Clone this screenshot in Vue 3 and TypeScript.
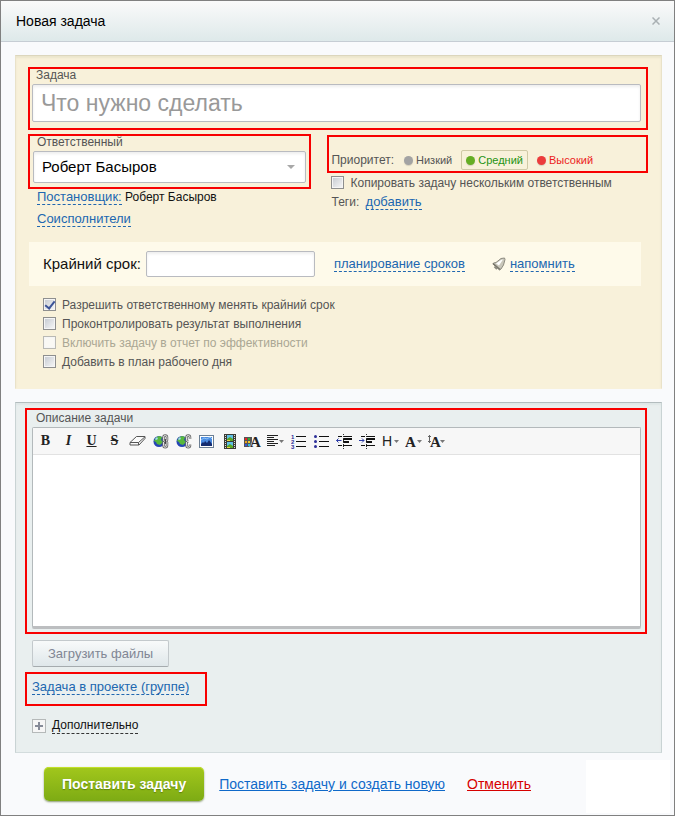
<script setup lang="ts">
import { ref } from 'vue'

interface Option {
  id: string
  label: string
  checked: boolean
  disabled?: boolean
}

const title = ref('')
const responsible = ref('Роберт Басыров')
const deadline = ref('')
const description = ref('')
const copyTask = ref(false)
const priority = ref('medium')

const priorities = [
  { id: 'low', label: 'Низкий' },
  { id: 'medium', label: 'Средний' },
  { id: 'high', label: 'Высокий' },
]

const options = ref<Option[]>([
  { id: 'allow', label: 'Разрешить ответственному менять крайний срок', checked: true },
  { id: 'control', label: 'Проконтролировать результат выполнения', checked: false },
  { id: 'report', label: 'Включить задачу в отчет по эффективности', checked: false, disabled: true },
  { id: 'plan', label: 'Добавить в план рабочего дня', checked: false },
])

const tools = [
  'bold', 'italic', 'underline', 'strike', 'eraser', 'link', 'unlink', 'image', 'video',
  'color', 'align', 'ol', 'ul', 'outdent', 'indent', 'heading', 'font', 'size',
]
const letters: Record<string, string> = { bold: 'B', italic: 'I', underline: 'U', strike: 'S' }
</script>

<template>
  <form class="dialog" @submit.prevent>
    <header class="head">
      <h1>Новая задача</h1>
      <button type="button" class="close" aria-label="Закрыть">
        <svg width="8" height="8" viewBox="0 0 8 8"><path d="M.5.5l7 7M7.5.5l-7 7" stroke="#a9b0b3" stroke-width="1.5" /></svg>
      </button>
    </header>

    <main class="body">
      <section class="panel warm">
        <div class="mark task">
          <label for="title">Задача</label>
          <input id="title" v-model="title" class="field" type="text" placeholder="Что нужно сделать" />
        </div>

        <div class="cols">
          <div class="left">
            <div class="mark person">
              <label for="responsible">Ответственный</label>
              <div class="select">
                <select id="responsible" v-model="responsible" class="field">
                  <option>Роберт Басыров</option>
                </select>
                <svg class="arrow" width="8" height="4" viewBox="0 0 8 4"><path d="M0 0h8L4 4z" fill="#a8a8a8" /></svg>
              </div>
            </div>
            <p class="line"><a href="#" class="dash">Постановщик:</a> <span class="name">Роберт Басыров</span></p>
            <p class="line"><a href="#" class="dash">Соисполнители</a></p>
          </div>

          <div class="right">
            <div class="mark priority" role="radiogroup" aria-label="Приоритет">
              <span class="caption">Приоритет:</span>
              <label v-for="p in priorities" :key="p.id" class="level" :class="[p.id, { on: priority === p.id }]">
                <input v-model="priority" type="radio" name="priority" :value="p.id" />{{ p.label }}
              </label>
            </div>
            <label class="check copy"><input v-model="copyTask" type="checkbox" />Копировать задачу нескольким ответственным</label>
            <p class="tags">Теги: <a href="#" class="dash">добавить</a></p>
          </div>
        </div>

        <div class="deadline">
          <label for="deadline">Крайний срок:</label>
          <input id="deadline" v-model="deadline" class="field" type="text" />
          <a href="#" class="dash">планирование сроков</a>
          <span class="remind">
            <svg width="14" height="14" viewBox="0 0 14 14">
              <path d="M1.5 6L4 5.500 9 1.500 12.500 1l.5 1.500L11.500 8l-2.500 4L7.500 13 1 7z" fill="#c9c7bb" stroke="#8d8b80" />
              <path d="M4 6.500l5-3.500 2-.5-4 6z" fill="#fff" />
              <path d="M1 6.500l7 6" stroke="#77756b" stroke-width="1.500" />
              <path d="M2.500 9.500l2.500 2.500" stroke="#8d8b80" stroke-width="2" />
            </svg>
            <a href="#" class="dash">напомнить</a>
          </span>
        </div>

        <div class="options">
          <label v-for="o in options" :key="o.id" class="check" :class="{ off: o.disabled }">
            <input v-model="o.checked" type="checkbox" :disabled="o.disabled" />{{ o.label }}
          </label>
        </div>
      </section>

      <section class="panel cool">
        <div class="mark descr">
          <label for="description">Описание задачи</label>
          <div class="editor">
            <div class="toolbar" role="toolbar">
              <button v-for="t in tools" :key="t" type="button" class="tool" :class="t" :aria-label="t">
                <template v-if="letters[t]">{{ letters[t] }}</template>
                <svg v-else-if="t === 'eraser'" width="17" height="10" viewBox="0 0 17 10" fill="#fafafa" stroke="#555">
                  <path d="M1 6.500L7.500.5h8.500v2L10 9H1z" /><path d="M1 6.500h8.500L16 .8M9.500 6.500V9" />
                </svg>
                <svg v-else-if="t === 'link' || t === 'unlink'" width="16" height="15" viewBox="0 0 16 15" fill="none">
                  <circle cx="6" cy="7.500" r="5.500" fill="#2746b4" />
                  <path d="M3 3.500l3-1.500 3 1-1 3 2 2-3 3-3-1-1-2-2-1z" fill="#58b83c" />
                  <path d="M2 5l2-2 1 2-2 1z" fill="#9fd8f0" />
                  <rect x="10.500" y="1.500" width="3.500" height="6" rx="1.700" stroke="#666" stroke-width="2.500" />
                  <path v-if="t === 'link'" d="M10.500 8v3.500a1.700 1.700 0 0 0 3.500 0V8" stroke="#666" stroke-width="2.500" />
                  <path v-else d="M10.500 8v3.500a1.700 1.700 0 0 0 3.500 0v-1" stroke="#666" stroke-width="2.500" />
                  <rect x="10.500" y="1.500" width="3.500" height="6" rx="1.700" stroke="#e4e4e4" />
                  <path v-if="t === 'link'" d="M10.500 8v3.500a1.700 1.700 0 0 0 3.500 0V8" stroke="#e4e4e4" />
                  <path v-else d="M10.500 8v3.500a1.700 1.700 0 0 0 3.500 0v-1" stroke="#e4e4e4" />
                  <path v-if="t === 'link'" d="M12.300 5v5" stroke="#333" />
                  <path v-else d="M12.500 5v4.500H16V5z" fill="#f8f8f8" />
                </svg>
                <svg v-else-if="t === 'image'" width="15" height="13" viewBox="0 0 15 13">
                  <rect x=".5" y=".5" width="14" height="12" fill="#fff" stroke="#6c7f94" />
                  <rect x="2" y="2" width="11" height="9" fill="#4a8ae0" />
                  <path d="M2 11V9l2-2 1 1 1-2 2 2 2-3 3 4v2z" fill="#152c70" />
                  <path d="M2 5l3-2 3 1 3-2 2 2" stroke="#8fc3f6" fill="none" />
                </svg>
                <svg v-else-if="t === 'video'" width="12" height="15" viewBox="0 0 12 15">
                  <path d="M0 0h12v15H0z" fill="#3c3c36" />
                  <path d="M3 1h6v6H3zM3 8h6v6H3z" fill="#5fc0e6" />
                  <path d="M3 5l3-2 3 2v2H3zM3 12l3-2 3 2v2H3z" fill="#5ca824" />
                  <path d="M3 6h3v1H3zM3 13h3v1H3z" fill="#e8d53c" />
                  <path d="M1.500 1v14M10.500 1v14" stroke="#ddd" stroke-dasharray="1 1" />
                </svg>
                <svg v-else-if="t === 'color'" width="18" height="19" viewBox="0 -3 18 19">
                  <path d="M0 2h8v10H0z" fill="#555" />
                  <path d="M1 3h2v2H1z" fill="#e22" /><path d="M4 3h2v2H4z" fill="#3a3" />
                  <path d="M1 6h2v2H1z" fill="#f0a020" /><path d="M4 6h2v2H4z" fill="#e8d030" />
                  <path d="M1 9h2v2H1z" fill="#35d" /><path d="M4 9h2v2H4z" fill="#3bd" />
                  <text x="6" y="12" class="glyph" stroke="#f8f8f8" stroke-width="1" paint-order="stroke">A</text>
                </svg>
                <svg v-else-if="t === 'align'" width="18" height="12" viewBox="0 0 18 12">
                  <path d="M0 .5h11M0 2.500h7M0 4.500h11M0 6.500h7M0 8.500h11M0 10.500h8" stroke="#222" />
                  <path d="M12 5h5l-2.500 3z" fill="#777" />
                </svg>
                <svg v-else-if="t === 'ol'" width="15" height="19" viewBox="0 -2 15 19">
                  <text x="0" y="5" class="num">1</text><text x="0" y="10" class="num">2</text><text x="0" y="15" class="num">3</text>
                  <path d="M5 2.500h10M5 7.500h10M5 12.500h10" stroke="#111" />
                </svg>
                <svg v-else-if="t === 'ul'" width="15" height="15" viewBox="0 0 15 15">
                  <path d="M5 2.500h10M5 7.500h10M5 12.500h10" stroke="#111" />
                  <circle cx="1.500" cy="2.500" r="1.500" fill="#2c2f98" /><circle cx="1.500" cy="7.500" r="1.500" fill="#2c2f98" /><circle cx="1.500" cy="12.500" r="1.500" fill="#2c2f98" />
                </svg>
                <svg v-else-if="t === 'outdent' || t === 'indent'" width="17" height="15" viewBox="0 0 17 15">
                  <path d="M2 2.500h4M7 2.500h9M2 11.500h4M7 11.500h9" stroke="#111" />
                  <path d="M7 5h9M7 8h6" stroke="#111" stroke-width="2" />
                  <path d="M7.500 0v15" stroke="#333" stroke-dasharray="1 1" />
                  <path v-if="t === 'outdent'" d="M5.500 6.500h-5M2.500 4.500l-2 2 2 2" stroke="#2c3ca8" fill="none" />
                  <path v-else d="M0 6.500h5M3 4.500l2 2-2 2" stroke="#2c3ca8" fill="none" />
                </svg>
                <svg v-else width="18" height="19" viewBox="0 -3 18 19">
                  <text v-if="t === 'heading'" x="0" y="11" class="sans">H</text>
                  <text v-else-if="t === 'font'" x="0" y="12" class="glyph">A</text>
                  <text v-else x="2" y="12" class="glyph">A</text>
                  <path v-if="t === 'size'" d="M1.500 0v8M0 1.500h3M0 6.500h3" stroke="#666" />
                  <path d="M12 5h5l-2.500 3z" fill="#777" />
                </svg>
              </button>
            </div>
            <textarea id="description" v-model="description"></textarea>
          </div>
        </div>

        <button type="button" class="upload">Загрузить файлы</button>
        <div class="mark project"><a href="#" class="dash">Задача в проекте (группе)</a></div>
        <div class="more">
          <button type="button" class="plus" aria-label="Раскрыть">
            <svg width="8" height="8" viewBox="0 0 8 8"><path d="M4 0v8M0 4h8" stroke="#868b98" stroke-width="2" /></svg>
          </button>
          <a href="#" class="dash dark">Дополнительно</a>
        </div>
      </section>
    </main>

    <footer class="foot">
      <div class="actions">
        <button type="submit" class="submit">Поставить задачу</button>
        <a href="#" class="create">Поставить задачу и создать новую</a>
        <a href="#" class="cancel">Отменить</a>
      </div>
      <span class="blank"></span>
    </footer>
  </form>
</template>

<style>
body {
  background: #f9fafc;
}
</style>

<style scoped>
* {
  box-sizing: border-box;
}
.dialog {
  display: flex;
  flex-direction: column;
  min-height: 100vh;
  border: 1px solid #808080;
  background: #f9fafc;
  font: 12px/16px "Liberation Sans", Arial, sans-serif;
  color: #555;
}
button,
input,
select,
textarea {
  margin: 0;
  font: inherit;
}
.head {
  display: flex;
  align-items: center;
  justify-content: space-between;
  height: 41px;
  padding: 0 14px 0 15px;
  border-bottom: 1px solid #c6cdd4;
  background: linear-gradient(#fafafa, #dee9ea);
}
h1 {
  margin: 0;
  font-size: 14px;
  font-weight: normal;
  color: #000;
}
.close {
  display: flex;
  padding: 0;
  border: 0;
  background: none;
}
.body {
  display: flex;
  flex-direction: column;
  gap: 13px;
  padding: 13px 12px 0 14px;
}
.panel {
  border: 1px solid;
}
.warm {
  padding: 11px 13px 17px 12px;
  border-color: #dcd6bd #e9e2c9 #f8f1da #e9e2c9;
  background: #f8f1da;
  box-shadow: inset 0 2px 2px #ebe5cd;
}
.cool {
  padding: 5px 14px 18px 9px;
  border-color: #b3bcbe #c9d3d4 #d3dcdd #c9d3d4;
  background: #e9efef;
  box-shadow: inset 0 2px 2px #dfe6e6;
}
.mark {
  border: 2px solid #f80000;
}
.field {
  display: block;
  width: 100%;
  padding: 0 8px;
  border: 1px solid #b9bbc0;
  border-radius: 2px;
  background: #fff;
  color: #000;
  box-shadow: inset 0 2px 3px #eee;
}
.task {
  padding: 0 5px 6px 2px;
}
.task label,
.person label,
.descr label {
  display: block;
  padding-left: 4px;
}
.task label,
.person label {
  padding-bottom: 3px;
  line-height: 12px;
}
.task .field {
  height: 38px;
  font-size: 23px;
}
.field::placeholder {
  color: #999;
}
.cols {
  display: flex;
  gap: 16px;
  margin-top: 4px;
}
.left {
  flex: 283 1 0;
}
.right {
  flex: 320 1 0;
}
.person {
  padding: 0 3px 4px 3px;
}
.select {
  display: grid;
  align-items: center;
}
.select > * {
  grid-area: 1 / 1;
}
.select .field {
  height: 32px;
  font-size: 15px;
  appearance: none;
}
.arrow {
  justify-self: end;
  margin-right: 11px;
  pointer-events: none;
}
.line {
  height: 22px;
  margin: 0;
  padding-left: 9px;
}
.name {
  color: #111;
}
.dash {
  border-bottom: 1px dashed #2067b0;
  color: #2067b0;
  font-size: 13px;
  line-height: 15px;
  text-decoration: none;
}
.dark {
  border-color: #333;
  color: #111;
}
.priority {
  display: flex;
  align-items: flex-end;
  height: 38px;
  padding: 0 2px 1px;
  margin-top: 1px;
  line-height: 18px;
}
.caption {
  margin-right: 5px;
  padding-bottom: 1px;
}
.level {
  display: flex;
  align-items: center;
  gap: 3px;
  margin-right: 4px;
  padding: 0 4px;
  border: 1px solid transparent;
  border-radius: 2px;
  font-size: 11px;
}
.level.on {
  border-color: #cfc9a6;
}
.level input {
  width: 9px;
  height: 9px;
  appearance: none;
  border-radius: 50%;
  background: #a3a3a3;
  box-shadow: 0 1px 1px #d6d0bc;
}
.medium {
  color: #259313;
}
.medium input {
  background: #65ae24;
}
.high {
  color: #ec1c1c;
}
.high input {
  background: #ec3c3c;
}
.check {
  display: flex;
  align-items: center;
  gap: 6px;
  height: 19px;
}
.check input {
  display: grid;
  place-items: center;
  flex: none;
  width: 13px;
  height: 13px;
  border: 1px solid #8e8f8f;
  outline: 1px solid #f5f5f5;
  outline-offset: -2px;
  appearance: none;
  background: linear-gradient(135deg, #c4c9d0, #f8f8f8);
}
.check input:checked::after {
  content: "";
  width: 4px;
  height: 8px;
  margin-bottom: 2px;
  border: solid #3b5397;
  border-width: 0 2px 2px 0;
  transform: rotate(38deg);
}
.off {
  color: #aaa794;
}
.off input {
  border-color: #b9b9b4;
  background: #f9f8f4;
}
.copy {
  padding-left: 4px;
}
.tags {
  margin: 2px 0 0;
  padding-left: 4px;
}
.tags .dash {
  margin-left: 3px;
}
.deadline {
  display: flex;
  align-items: center;
  height: 44px;
  margin: 9px 7px 0 1px;
  padding-left: 14px;
  background: #fefaea;
}
.deadline > label {
  margin-right: 5px;
  font-size: 15px;
  color: #111;
}
.deadline .field {
  flex: 0 1 169px;
  min-width: 0;
  height: 26px;
  margin-right: 19px;
}
.remind {
  display: flex;
  align-items: center;
  gap: 4px;
  margin-left: 27px;
}
.options {
  padding: 9px 0 0 15px;
}
.descr {
  padding: 0 4px 3px 5px;
}
.descr label {
  line-height: 17px;
}
.editor {
  border: 1px solid #b3b9bb;
  border-bottom: 3px solid #bcbec0;
  border-radius: 2px;
  background: #fff;
}
.toolbar {
  display: flex;
  flex-wrap: wrap;
  padding: 1px;
  border-bottom: 1px solid #e2e2e2;
  background: #f7f7f7;
}
.tool {
  display: flex;
  align-items: center;
  justify-content: center;
  width: 23px;
  height: 24px;
  padding: 0;
  border: 0;
  background: none;
  color: #222;
  font: bold 14px/16px "Liberation Serif", serif;
}
.italic {
  font-style: italic;
}
.underline {
  text-decoration: underline;
}
.strike {
  text-decoration: line-through;
}
.glyph {
  font: bold 15px "Liberation Serif", serif;
  fill: #222;
}
.sans {
  font: 14px "Liberation Sans", sans-serif;
  fill: #222;
}
.num {
  font: bold 6px "Liberation Sans", sans-serif;
  fill: #2c2f98;
}
textarea {
  display: block;
  width: 100%;
  height: 171px;
  padding: 6px;
  border: 0;
  background: none;
  resize: none;
}
.upload {
  display: block;
  height: 27px;
  margin: 6px 0 5px 7px;
  padding: 0 15px;
  border: 1px solid #c3c9cc;
  border-bottom-color: #a5abae;
  border-radius: 2px;
  background: linear-gradient(#f8fafa, #dfe7ea);
  color: #808694;
  font-size: 13px;
}
.project {
  width: fit-content;
  min-width: 182px;
  height: 34px;
  padding: 5px;
}
.more {
  display: flex;
  align-items: center;
  gap: 6px;
  margin: 12px 0 0 7px;
}
.more .dash {
  font-size: 12px;
}
.plus {
  display: grid;
  place-items: center;
  width: 14px;
  height: 14px;
  padding: 0;
  border: 1px solid #b5b9b9;
  background: #f6f6f6;
}
.foot {
  display: flex;
  flex: 1;
  align-items: flex-start;
  justify-content: space-between;
  padding: 7px 4px 2px 43px;
  font-size: 14px;
}
.actions {
  display: flex;
  align-items: center;
  padding: 7px 0;
}
.submit {
  height: 34px;
  margin-right: 15px;
  padding: 0 18px;
  border: 0;
  border-radius: 5px;
  background: linear-gradient(#a2c71c, #7dab14);
  box-shadow: inset 0 1px #c3e02a, 0 1px 2px #8a9a70;
  color: #fff;
  font-size: 14px;
  font-weight: bold;
  text-shadow: 0 1px 1px #5f830c;
}
.create {
  margin-right: 22px;
  color: #0f69c9;
}
.cancel {
  color: #d60000;
}
.blank {
  align-self: stretch;
  width: 84px;
  background: #fff;
}
</style>
